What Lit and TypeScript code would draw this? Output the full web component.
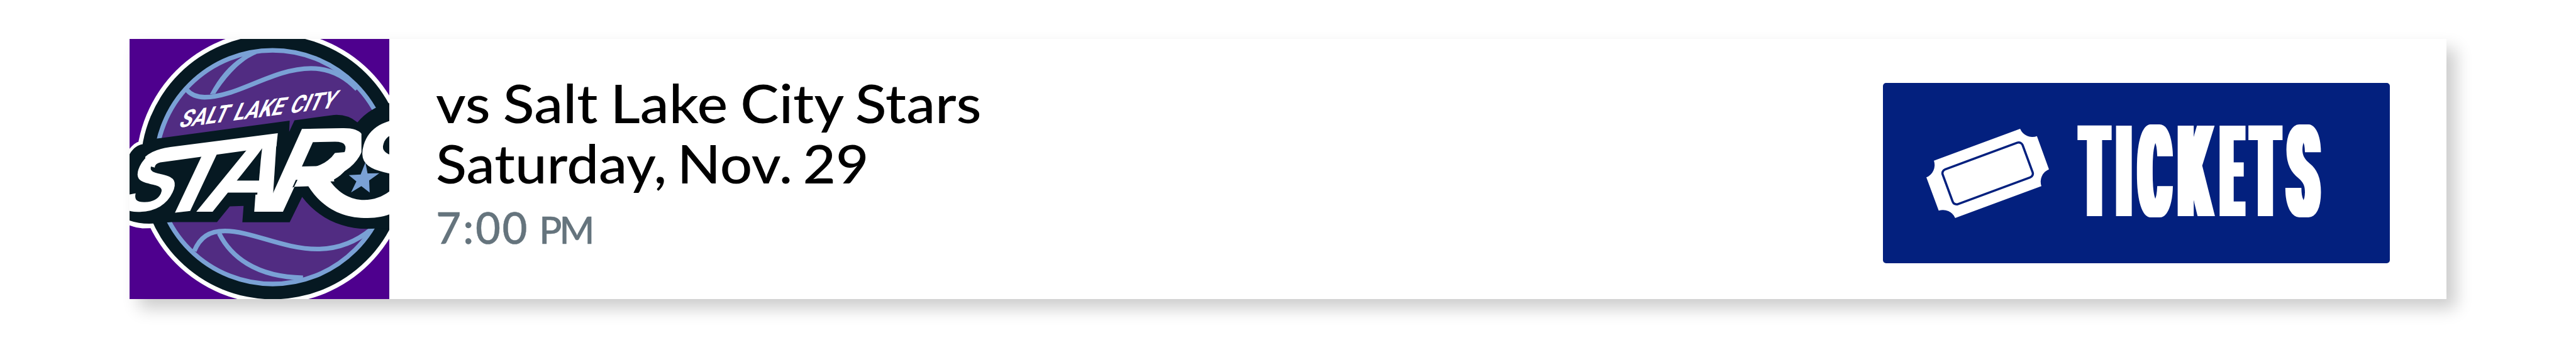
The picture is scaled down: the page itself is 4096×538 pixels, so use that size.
import { LitElement, css, html, svg } from 'lit';
import { customElement, property } from 'lit/decorators.js';

@customElement('team-logo')
export class TeamLogo extends LitElement {
  static styles = css`
    :host {
      display: block;
      background: #4e008e;
    }

    svg {
      display: block;
      width: 100%;
      height: 100%;
    }

    .white {
      fill: #fff;
    }

    .dark {
      fill: #061922;
    }

    .blue {
      fill: #7aa1d5;
    }

    .ball {
      fill: #512c82;
      stroke: #7aa1d5;
      stroke-width: 26;
    }

    .seam {
      fill: none;
      stroke: #7aa1d5;
      stroke-width: 26;
    }

    .city {
      fill: #fff;
      font: 700 140px Roboto, sans-serif;
      word-spacing: 12px;
    }

    .word {
      fill: #fff;
      font-family: 'Liberation Sans', sans-serif;
      font-weight: 700;
    }
  `;

  render() {
    return html`
      <svg viewBox="32 46 1467 1467" preserveAspectRatio="none">
        <defs>
          <clipPath id="s1"><path d="M0 600H230V775L330 850V1060H0Z" /></clipPath>
          <clipPath id="r"><path d="M700 500H1340V850H1160L960 881L897 1021H700Z" /></clipPath>
          <clipPath id="s2"><path d="M1300 440H1520V850H1300Z" /></clipPath>
        </defs>
        <circle class="white" cx="840" cy="769.5" r="771" />
        <path class="white" d="M20 682C40 652 62 632 88 624L180 640V1113L105 1115Q66 1112 20 1094Z" />
        <circle class="dark" cx="840" cy="769.5" r="746" />
        <circle class="ball" cx="838.5" cy="769.5" r="659.5" />

        <path class="seam" d="M356 335Q390 375 455 375C640 375 840 212 1055 212C1150 212 1240 250 1315 330" />
        <path class="blue" d="M485 358Q560 215 667 147L700 120L750 130C660 165 580 255 515 356Z" />
        <path class="seam" d="M397 1243C430 1165 480 1130 570 1130C720 1130 900 1232 1090 1232C1210 1232 1310 1190 1395 1120" />
        <path class="seam" d="M537 1143C600 1270 740 1390 1010 1394" />

        <path
          class="dark"
          d="M20 720C45 665 75 645 107 640L187 608L935 507L932 570L962 505L1185 475Q1262 470 1317 517
            Q1390 430 1499 408V1113L1372 1118C1220 1118 1090 1050 1005 938L935 1081H668L675 988L597 991L525 1080
            H270L165 1088Q82 1092 20 1066Z"
        />

        <text class="city" transform="matrix(1 -.13 -.45 1 303 548)" textLength="876" lengthAdjust="spacingAndGlyphs">SALT LAKE CITY</text>

        <g class="word">
          <g clip-path="url(#s1)">
            <text transform="matrix(.9 -.03 -.47 1 -58 1022)" font-size="506">S</text>
          </g>
          <text transform="matrix(1.05 -.127 -.47 1 150 1043)" font-size="565">T</text>
          <text transform="matrix(1.03 0 -.44 1 393 1021)" font-size="617">A</text>
          <g clip-path="url(#r)">
            <text transform="matrix(.98 -.02 -.45 1 750 1021)" font-size="677">R</text>
          </g>
          <g clip-path="url(#s2)">
            <text transform="matrix(1 0 -.3 1 1186 1040)" font-size="780">S</text>
          </g>
        </g>

        <!-- swashes that tie the letters together -->
        <path class="white" d="M120 712Q160 670 262 656L868 578L860 652L430 712L205 743Q175 750 174 772L130 760Z" />
        <path class="white" d="M742 925L735 1021H897L962 880L832 925Z" />
        <path
          class="white"
          d="M1008 783Q1140 765 1190 690L1297 680Q1275 800 1164 850C1210 915 1280 955 1355 955C1410 955 1460 935 1499 905
            V1035C1460 1050 1410 1057 1355 1057C1220 1055 1110 990 1040 878L960 880Z"
        />
        <path class="blue" d="M1362 743L1374 805L1440 804L1383 845L1386 913L1339 877L1281 912L1311 850L1268 815L1335 811Z" />
      </svg>
    `;
  }
}

@customElement('tickets-button')
export class TicketsButton extends LitElement {
  static styles = css`
    :host {
      display: flex;
      align-items: center;
      gap: 35px;
      box-sizing: border-box;
      width: 805.5px;
      height: 287.3px;
      padding-left: 69px;
      border-radius: 5px;
      background: #03207e;
    }

    .icon {
      width: 195px;
      height: 142px;
      fill: #fff;
    }

    .icon rect {
      stroke: #03207e;
      stroke-width: 13;
    }

    .label {
      width: 409.6px;
      height: 172px;
      overflow: visible;
      fill: #fff;
      font: 700 247.5px Roboto, sans-serif;
    }
  `;

  // start and advance of each condensed letter
  letters = [
    { char: 'T', x: 19.5, width: 52.4 },
    { char: 'I', x: 89.5, width: 26.6 },
    { char: 'C', x: 132.8, width: 59.5 },
    { char: 'K', x: 209.8, width: 60.5 },
    { char: 'E', x: 292.8, width: 39 },
    { char: 'T', x: 351.4, width: 52.4 },
    { char: 'S', x: 421.6, width: 58.5 },
  ];

  render() {
    return html`
      <svg class="icon" viewBox="118 90 714 520">
        <path
          d="M162 276L664 90A78 78 0 0 0 762 133L832 326A78 78 0 0 0 788 424L286 610A78 78 0 0 0 190 567L118 373
            A78 78 0 0 0 162 276Z"
        />
        <rect x="227" y="242" width="496" height="216" rx="24" transform="rotate(-20.3 475 350)" />
      </svg>
      <svg class="label" viewBox="0 0 500 210">
        <filter id="fat" x="-5%" y="-5%" width="110%" height="110%">
          <feMorphology operator="dilate" radius="9 0" />
        </filter>
        <g filter="url(#fat)">
          <text y="187.5">${this.letters.map((l) => svg`<tspan x=${l.x} textLength=${l.width} lengthAdjust="spacingAndGlyphs">${l.char}</tspan>`)}</text>
        </g>
      </svg>
    `;
  }
}

@customElement('app-root')
export class AppRoot extends LitElement {
  static styles = css`
    :host {
      display: block;
      box-sizing: border-box;
      height: 538px;
      padding: 62.3px 205.6px 0;
      background: #fff;
    }

    .card {
      display: flex;
      width: 3684.8px;
      height: 413.7px;
      background: #fff;
      box-shadow: 15px 15px 25px rgba(0, 0, 0, 0.2);
    }

    team-logo {
      width: 413.7px;
      height: 413.7px;
    }

    .details {
      flex: 1;
      padding: 54px 0 0 74px;
      font-family: Lato, sans-serif;
    }

    .opponent,
    .date {
      margin: 0;
      color: #000;
      font-size: 84.6px;
      font-weight: 500;
      line-height: 95.6px;
      transform: scaleX(1.088);
      transform-origin: 0 0;
      word-spacing: -3px;
    }

    .date {
      transform: scaleX(1.07);
      word-spacing: -6px;
    }

    .time {
      margin: 7px 0 0;
      color: #65747d;
      font-size: 69px;
      font-weight: 500;
      line-height: 95.6px;
      letter-spacing: 2.6px;
      word-spacing: -4px;
      -webkit-text-stroke: 0.4px #65747d;
    }

    .time small {
      font-size: 60px;
      letter-spacing: -4px;
    }

    tickets-button {
      margin: 69.8px 90.5px 0 0;
    }
  `;

  @property() opponent = 'vs Salt Lake City Stars';
  @property() date = 'Saturday, Nov. 29';

  render() {
    return html`
      <div class="card">
        <team-logo></team-logo>
        <div class="details">
          <h2 class="opponent">${this.opponent}</h2>
          <p class="date">${this.date}</p>
          <p class="time">7:00 <small>PM</small></p>
        </div>
        <tickets-button></tickets-button>
      </div>
    `;
  }
}
